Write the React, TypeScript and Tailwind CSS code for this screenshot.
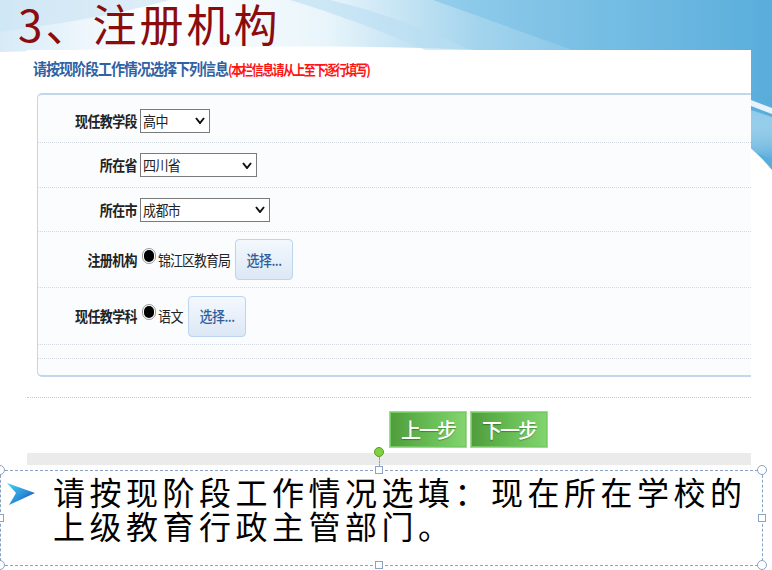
import React from 'react'

// slide background: white with blue swoosh along the top and right edge
function SlideBackground() {
  return (
    <svg
      className="absolute inset-0"
      width="772"
      height="570"
      viewBox="0 0 772 570"
      preserveAspectRatio="none"
    >
      <defs>
        <linearGradient id="topBand" x1="0" y1="0" x2="1" y2="0">
          <stop offset="0" stopColor="#d7ebf7" />
          <stop offset="0.2" stopColor="#ffffff" />
          <stop offset="0.42" stopColor="#e9f5fb" />
          <stop offset="0.62" stopColor="#a3d4ed" />
          <stop offset="1" stopColor="#57acda" />
        </linearGradient>
        <linearGradient id="deepBand" x1="0" y1="0" x2="1" y2="0">
          <stop offset="0" stopColor="#8ccaea" />
          <stop offset="1" stopColor="#5aaedc" />
        </linearGradient>
        <linearGradient id="rightFade" x1="0" y1="0" x2="0" y2="1">
          <stop offset="0" stopColor="#8ccaea" stopOpacity="1" />
          <stop offset="1" stopColor="#ffffff" stopOpacity="0" />
        </linearGradient>
      </defs>
      <rect width="772" height="570" fill="#ffffff" />
      <path d="M0 0 H772 V170 C740 130 660 80 560 56 C420 42 200 46 0 52 Z" fill="url(#topBand)" />
      <path d="M0 0 H170 C120 14 60 24 0 32 Z" fill="#cde6f4" opacity="0.7" />
      <path d="M290 0 H330 C380 12 430 30 470 50 L430 52 C380 30 330 12 290 0 Z" fill="#b9def1" opacity="0.6" />
      <path d="M433 0 H772 V98 L751 92 C680 72 620 58 578 52 Z" fill="url(#deepBand)" opacity="0.8" />
      <path d="M751 100 L772 108 L772 114 L751 106 Z" fill="#ffffff" opacity="0.85" />
      <path d="M751 110 L772 117 L772 160 L751 150 Z" fill="url(#rightFade)" />
    </svg>
  )
}

function Chevron() {
  return (
    <svg width="10" height="7" viewBox="0 0 10 7">
      <polyline points="1,1 5,6 9,1" fill="none" stroke="#111" strokeWidth="2" />
    </svg>
  )
}

function Select({ value, width }: { value: string; width: string }) {
  return (
    <div
      className={`${width} h-[24px] border border-[#7b7b7b] bg-white flex items-center justify-between pl-[2px] pr-[4px] text-[13px] text-[#222] tracking-[-0.6px]`}
    >
      <span className="inline-block scale-y-[1.12]">{value}</span>
      <Chevron />
    </div>
  )
}

function Radio() {
  return (
    <div className="w-[14px] h-[16px] mb-[8px] rounded-full border border-[#9a9a9a] bg-white flex items-center justify-center">
      <div className="w-[10px] h-[12px] rounded-full bg-black" />
    </div>
  )
}

function PickButton() {
  return (
    <div className="ml-[5px] w-[58px] h-[41px] rounded-[4px] border border-[#bcd4ec] bg-gradient-to-b from-[#f4f8fd] to-[#dce8f6] flex items-center justify-center text-[13px] font-medium text-[#2d5d9c] tracking-[-0.5px]">
      <span className="inline-block scale-y-[1.12]">选择...</span>
    </div>
  )
}

function Label({ text }: { text: string }) {
  return (
    <div className="w-[99px] text-right text-[13px] font-bold text-[#222] tracking-[-0.6px]">
      <span className="inline-block scale-y-[1.12]">{text}</span>
    </div>
  )
}

function StepButton({ text }: { text: string }) {
  return (
    <div className="w-[78px] h-[37px] border border-[#a5d896] bg-gradient-to-r from-[#4f9c3c] via-[#67bb53] to-[#82d56f] shadow-[inset_0_0_0_1px_#74c861] flex items-center justify-center text-white font-medium text-[20px] tracking-[-2px] [text-shadow:0_1px_1px_rgba(0,60,0,0.4)]">
      {text}
    </div>
  )
}

export default function App() {
  return (
    <div className="relative w-[772px] h-[570px] overflow-hidden bg-white font-['Noto_Sans_CJK_SC',sans-serif]">
      <SlideBackground />

      <div className="relative flex flex-col">
        {/* 标题 */}
        <div className="h-[50px] pl-[18px] text-[44px] leading-[46px] text-[#8b0c0c] tracking-[3px]">
          3、注册机构
        </div>

        {/* 截图区域 */}
        <div className="ml-[27px] w-[724px] h-[416px] bg-white flex flex-col">
          <div className="h-[43px] pt-[9px] pl-[6px]">
            <div className="flex items-start leading-[16px] origin-top scale-y-[1.15]">
              <span className="text-[14px] font-bold text-[#2f62a5] tracking-[-1px]">
                请按现阶段工作情况选择下列信息
              </span>
              <span className="mt-[1px] text-[12px] font-bold text-[#ff1414] tracking-[-1.6px]">
                (本栏信息请从上至下逐行填写)
              </span>
            </div>
          </div>

          <div className="ml-[10px] h-[284px] border-y-2 border-l border-[#c2d7ec] border-r-0 rounded-l-[5px] bg-[#fafcfd] flex flex-col">
            <div className="h-[48px] pt-[4px] flex items-center gap-[3px] border-b border-dotted border-[#d3d9e0]">
              <Label text="现任教学段" />
              <Select value="高中" width="w-[70px]" />
            </div>
            <div className="h-[45px] flex items-center gap-[3px] border-b border-dotted border-[#d3d9e0]">
              <Label text="所在省" />
              <Select value="四川省" width="w-[117px]" />
            </div>
            <div className="h-[44px] flex items-center gap-[3px] border-b border-dotted border-[#d3d9e0]">
              <Label text="所在市" />
              <Select value="成都市" width="w-[130px]" />
            </div>
            <div className="h-[56px] flex items-center border-b border-dotted border-[#d3d9e0]">
              <Label text="注册机构" />
              <div className="ml-[5px]">
                <Radio />
              </div>
              <span className="ml-[2px] inline-block scale-y-[1.12] text-[13px] text-[#222] tracking-[-1px]">锦江区教育局</span>
              <PickButton />
            </div>
            <div className="h-[57px] flex items-center border-b border-dotted border-[#d3d9e0]">
              <Label text="现任教学科" />
              <div className="ml-[5px]">
                <Radio />
              </div>
              <span className="ml-[2px] inline-block scale-y-[1.12] text-[13px] text-[#222] tracking-[-0.5px]">语文</span>
              <PickButton />
            </div>
            <div className="h-[14px] border-b border-dotted border-[#d3d9e0]" />
            <div className="flex-1" />
          </div>

          <div className="mt-[20px] border-t border-dotted border-[#c8c8c8]" />

          <div className="mt-[13px] ml-[362px] flex gap-[3px]">
            <StepButton text="上一步" />
            <StepButton text="下一步" />
          </div>

          <div className="mt-[5px] h-[12px] bg-[#ebebeb]" />
        </div>

        {/* 说明文字框 */}
        <div className="mt-[4px] w-[763px] h-[96px] border border-dashed border-[#8aa3c5] flex items-start pt-[3px]">
          <svg width="30" height="24" viewBox="0 0 30 24" className="ml-[5px] mt-[8px] shrink-0">
            <defs>
              <linearGradient id="bullet" x1="0" y1="0" x2="1" y2="1">
                <stop offset="0" stopColor="#49d0f3" />
                <stop offset="0.55" stopColor="#2a8fd8" />
                <stop offset="1" stopColor="#1f2f9e" />
              </linearGradient>
            </defs>
            <path d="M1 1 L29 11 L3 23 L10 11 Z" fill="url(#bullet)" />
          </svg>
          <div className="ml-[17px] text-[32px] leading-[34px] text-black tracking-[4.5px]">
            <div>请按现阶段工作情况选填：现在所在学校的</div>
            <div>上级教育行政主管部门。</div>
          </div>
        </div>
      </div>

      {/* 选中框的控制点 */}
      <div className="absolute left-[374px] top-[447px] w-[10px] h-[10px] rounded-full bg-[#7fd23d] border border-[#5c9a2c]" />
      <div className="absolute left-[379px] top-[457px] h-[10px] border-l border-dashed border-[#8aa3c5]" />
      <div className="absolute left-[375px] top-[466px] w-[8px] h-[8px] bg-white border border-[#8aa3c5]" />
      <div className="absolute left-[375px] top-[561px] w-[8px] h-[8px] bg-white border border-[#8aa3c5]" />
      <div className="absolute left-[758px] top-[514px] w-[8px] h-[8px] bg-white border border-[#8aa3c5]" />
      <div className="absolute left-[-4px] top-[514px] w-[8px] h-[8px] bg-white border border-[#8aa3c5]" />
      <div className="absolute left-[757px] top-[465px] w-[10px] h-[10px] rounded-full bg-white border border-[#8aa3c5]" />
      <div className="absolute left-[757px] top-[560px] w-[10px] h-[10px] rounded-full bg-white border border-[#8aa3c5]" />
      <div className="absolute left-[-5px] top-[465px] w-[10px] h-[10px] rounded-full bg-white border border-[#8aa3c5]" />
      <div className="absolute left-[-5px] top-[560px] w-[10px] h-[10px] rounded-full bg-white border border-[#8aa3c5]" />
    </div>
  )
}
